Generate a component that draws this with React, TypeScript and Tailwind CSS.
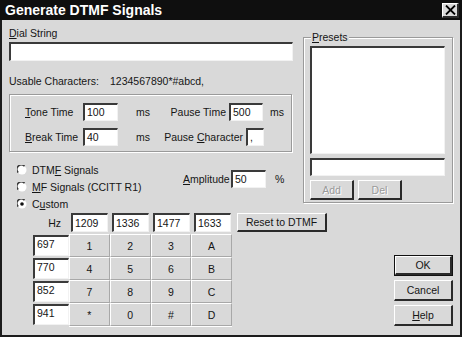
import React from "react"

const sunken =
  "bg-white border-t-2 border-l-2 border-t-[#3a3a3a] border-l-[#3a3a3a] border-b border-r border-b-[#f2f2f2] border-r-[#f2f2f2]"
const raised =
  "bg-[#d9d9d9] border-t border-l border-t-white border-l-white border-b-2 border-r-2 border-b-[#2a2a2a] border-r-[#2a2a2a] flex items-center justify-center"
const etched = "border border-[#9a9a9a] shadow-[inset_1px_1px_0_#fff,1px_1px_0_#fff]"

function Field({ value = "", className = "" }: { value?: string; className?: string }) {
  return (
    <div className={`${sunken} ${className} flex items-center pl-[2px] leading-none`}>
      {value}
    </div>
  )
}

function Radio({ checked = false }: { checked?: boolean }) {
  return (
    <svg width="10" height="10" viewBox="0 0 10 10" className="shrink-0">
      <circle cx="5" cy="5" r="4.5" fill="#fff" />
      <path d="M1.2 7.5 A4.3 4.3 0 0 1 7.5 1.2" stroke="#3a3a3a" strokeWidth="1.6" fill="none" />
      {checked && <circle cx="5" cy="5" r="1.8" fill="#111" />}
    </svg>
  )
}

const keys = [
  ["697", "1", "2", "3", "A"],
  ["770", "4", "5", "6", "B"],
  ["852", "7", "8", "9", "C"],
  ["941", "*", "0", "#", "D"],
]

export default function App() {
  return (
    <div className="w-[462px] h-[337px] flex flex-col bg-[#d9d9d9] text-[#151515] font-['Liberation_Sans',Arial,sans-serif] text-[10.5px] leading-[12px] whitespace-nowrap overflow-hidden">
      {/* Title bar */}
      <div className="h-[20px] bg-[#0f0f0f] flex items-center pl-[5px] pr-[3px] shrink-0">
        <span className="text-white font-bold text-[14px] leading-none">Generate DTMF Signals</span>
        <div className={`ml-auto w-[17px] h-[15px] ${raised}`}>
          <svg width="11" height="10" viewBox="0 0 11 10">
            <path d="M1 0.5 L10 9.5 M10 0.5 L1 9.5" stroke="#000" strokeWidth="1.8" />
          </svg>
        </div>
      </div>

      <div className="flex-1 flex flex-col border-l-2 border-r-2 border-b-2 border-[#1c1c1c]">
        {/* Top row */}
        <div className="flex pl-[7px] pt-[7px] h-[193px] shrink-0">
          <div className="w-[284px] flex flex-col">
            <div className="h-[12px]">
              <u className="underline-offset-1">D</u>ial String
            </div>
            <Field className="mt-[3px] h-[19px] w-[284px]" />
            <div className="mt-[14px] h-[12px] flex">
              <span className="w-[101px]">Usable Characters:</span>
              <span>1234567890*#abcd,</span>
            </div>

            <div className={`mt-[7px] h-[58px] w-[283px] ${etched} pt-[8px] flex flex-col gap-[7px]`}>
              <div className="flex items-center pl-[15px] h-[18px]">
                <span className="w-[58px]">
                  <u>T</u>one Time
                </span>
                <Field value="100" className="w-[35px] h-[18px]" />
                <span className="w-[55px] pl-[18px]">ms</span>
                <span className="w-[56px] flex justify-end pr-[3px]">Pause Time</span>
                <Field value="500" className="w-[34px] h-[18px]" />
                <span className="pl-[7px]">ms</span>
              </div>
              <div className="flex items-center pl-[15px] h-[18px]">
                <span className="w-[58px]">
                  <u>B</u>reak Time
                </span>
                <Field value="40" className="w-[35px] h-[18px]" />
                <span className="w-[45px] pl-[18px]">ms</span>
                <span className="w-[83px] flex justify-end pr-[3px]">
                  <span>
                    Pause <u>C</u>haracter
                  </span>
                </span>
                <Field value="," className="w-[18px] h-[18px]" />
              </div>
            </div>

            <div className="mt-[10px] flex">
              <div className="w-[174px] pl-[8px] flex flex-col">
                <div className="h-[16px] flex items-center gap-[5px]">
                  <Radio />
                  <span>
                    DTM<u>F</u> Signals
                  </span>
                </div>
                <div className="h-[17px] flex items-center gap-[5px]">
                  <Radio />
                  <span>
                    <u>M</u>F Signals (CCITT R1)
                  </span>
                </div>
                <div className="h-[17px] flex items-center gap-[5px]">
                  <Radio checked />
                  <span>
                    C<u>u</u>stom
                  </span>
                </div>
              </div>
              <div className="mt-[8px] h-[18px] flex items-center">
                <span className="w-[48px]">
                  <u>A</u>mplitude
                </span>
                <Field value="50" className="w-[35px] h-[18px]" />
                <span className="pl-[9px]">%</span>
              </div>
            </div>
          </div>

          {/* Presets */}
          <div className={`relative ml-[10px] mt-[10px] w-[150px] h-[166px] ${etched} pl-[6px] pt-[8px]`}>
            <span className="absolute -top-[7px] left-[7px] px-[1px] bg-[#d9d9d9]">
              <u>P</u>resets
            </span>
            <div className={`${sunken} w-[135px] h-[108px]`} />
            <Field className="mt-[4px] w-[135px] h-[18px]" />
            <div className="mt-[4px] flex gap-[4px]">
              <div className={`${raised} w-[44px] h-[20px] text-[#9a9a9a] [text-shadow:1px_1px_0_#fff]`}>Add</div>
              <div className={`${raised} w-[44px] h-[20px] text-[#9a9a9a] [text-shadow:1px_1px_0_#fff]`}>Del</div>
            </div>
          </div>
        </div>

        {/* Hz row */}
        <div className="flex items-center pl-[7px] h-[19px] shrink-0">
          <span className="w-[62px] text-right pr-[10px]">Hz</span>
          <div className="flex gap-[4px]">
            <Field value="1209" className="w-[37px] h-[19px]" />
            <Field value="1336" className="w-[37px] h-[19px]" />
            <Field value="1477" className="w-[37px] h-[19px]" />
            <Field value="1633" className="w-[37px] h-[19px]" />
          </div>
          <div className={`${raised} ml-[6px] w-[90px] h-[19px]`}>Reset to DTMF</div>
        </div>

        {/* Keypad and buttons */}
        <div className="flex pl-[7px] pr-[7px] mt-[2px]">
          <div className="pl-[24px] flex">
            <div className="flex flex-col">
              {keys.map((row) => (
                <div key={row[0]} className="h-[23px] pt-[1px]">
                  <Field value={row[0]} className="w-[36px] h-[21px] !items-start pt-[2px]" />
                </div>
              ))}
            </div>
            <div className="grid grid-cols-4 w-[163px] border-b border-white">
              {keys.flatMap((row) =>
                row.slice(1).map((k) => (
                  <div
                    key={k}
                    className="h-[23px] flex items-center justify-center border-t border-l border-white border-r border-b border-r-[#a8a8a8] border-b-[#a8a8a8]"
                  >
                    {k}
                  </div>
                ))
              )}
            </div>
          </div>

          <div className="ml-auto mt-[21px] flex flex-col gap-[4px]">
            <div className="w-[59px] h-[21px] border border-[#111] flex">
              <div className={`${raised} flex-1`}>OK</div>
            </div>
            <div className={`${raised} w-[59px] h-[21px]`}>Cancel</div>
            <div className={`${raised} w-[59px] h-[21px]`}>
              <span>
                <u>H</u>elp
              </span>
            </div>
          </div>
        </div>
      </div>
    </div>
  )
}
